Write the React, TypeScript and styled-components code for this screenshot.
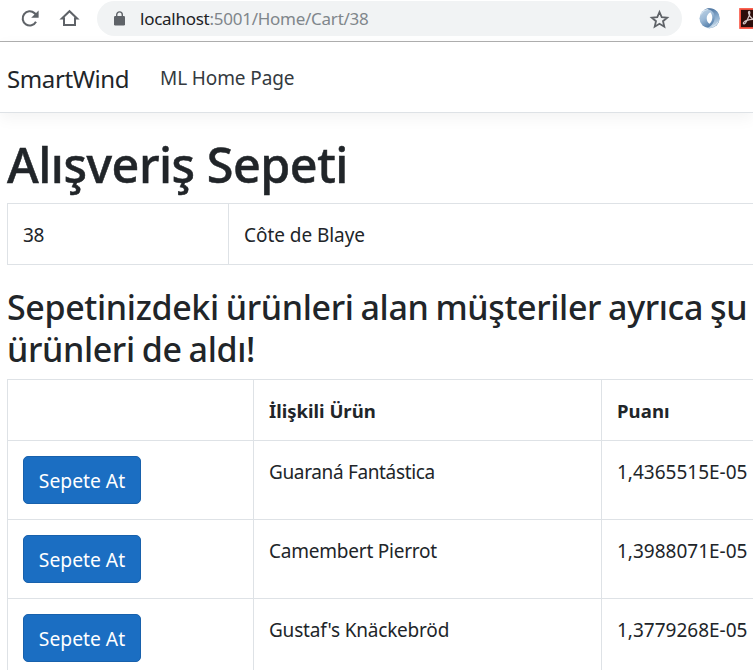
import React from 'react';
import styled, { createGlobalStyle } from 'styled-components';

const GlobalStyle = createGlobalStyle`
  *, *::before, *::after { box-sizing: border-box; }
  html, body { margin: 0; overflow: hidden; }
  body {
    background: #fff;
    color: #212529;
    font: 400 19px/30px "Noto Sans", "Open Sans", sans-serif;
  }
`;

const Window = styled.div`
  width: 753px;
  height: 670px;
  overflow: hidden;
  background: #fff;
`;

const BrowserBar = styled.div`
  display: flex;
  align-items: flex-start;
  height: 42px;
  padding-left: 18px;
  border-bottom: 1px solid #b0b0b0;
  overflow: hidden;
`;

const BarIcon = styled.svg<{ $gap: number }>`
  flex: none;
  width: 24px;
  height: 24px;
  margin: 6px ${(p) => p.$gap}px 0 0;
`;

const AddressBar = styled.div`
  display: flex;
  flex: none;
  align-items: center;
  width: 585px;
  height: 35px;
  margin: 1px 15px 0 0;
  padding: 0 11px 0 16px;
  border-radius: 18px;
  background: #f1f3f4;
`;

const LockIcon = styled.svg`
  width: 13px;
  height: 15px;
  margin-right: 14px;
`;

const Url = styled.span`
  flex: 1;
  color: #80868b;
  font-size: 17px;
  line-height: 24px;
  letter-spacing: -0.26px;
`;

const Host = styled.span`
  color: #202124;
`;

const StarIcon = styled.svg`
  width: 24px;
  height: 24px;
`;

const Navbar = styled.nav`
  display: flex;
  align-items: center;
  height: 71px;
  padding: 2px 7px 0;
  border-bottom: 1px solid #dee2e6;
  box-shadow: 0 5px 15px rgba(0, 0, 0, 0.05);
`;

const Brand = styled.a`
  width: 153px;
  padding-top: 1px;
  font-size: 24px;
  letter-spacing: -0.4px;
`;

const NavLink = styled.a`
  color: #343a40;
  letter-spacing: -0.1px;
`;

const Main = styled.main`
  padding: 20px 0 0 7px;
`;

const Title = styled.h1`
  height: 60px;
  margin: 0 0 10px;
  font-size: 48.5px;
  font-weight: 500;
  line-height: 62px;
  letter-spacing: -0.5px;
  -webkit-text-stroke: 0.5px #212529;
`;

const Subtitle = styled.h2`
  width: 746px;
  margin: 0 0 9px;
  font-size: 34px;
  font-weight: 500;
  line-height: 42px;
  letter-spacing: -0.36px;
  word-spacing: -1.5px;
`;

const Table = styled.table<{ $bottom?: number }>`
  width: 1000px;
  margin-bottom: ${(p) => p.$bottom ?? 0}px;
  table-layout: fixed;
  border-collapse: collapse;
`;

const Col = styled.col<{ $width?: number }>`
  width: ${(p) => (p.$width ? `${p.$width}px` : 'auto')};
`;

const Cell = styled.td<{ $tracking?: number }>`
  padding: 16px 15px 14px;
  border: 1px solid #dee2e6;
  text-align: left;
  vertical-align: top;
  letter-spacing: ${(p) => p.$tracking ?? 0}px;
`;

const HeadCell = styled(Cell)`
  font-weight: 700;
  font-size: 18.5px;
`;

const ActionCell = styled(Cell)`
  padding: 15px;
`;

const AddButton = styled.button`
  display: block;
  width: 118px;
  height: 48px;
  padding: 1px 0 0;
  border: 1px solid #1861ac;
  border-radius: 5px;
  background: #1b6ec2;
  color: #fff;
  font: inherit;
  font-size: 19.3px;
  letter-spacing: 0;
  white-space: nowrap;
`;

const products = [
  { name: 'Guaraná Fantástica', score: '1,4365515E-05', tracking: -0.35 },
  { name: 'Camembert Pierrot', score: '1,3988071E-05', tracking: -0.22 },
  { name: "Gustaf's Knäckebröd", score: '1,3779268E-05', tracking: -0.21 },
];

export default function App() {
  return (
    <Window>
      <GlobalStyle />
      <BrowserBar>
        <BarIcon $gap={15} viewBox="0 0 24 24">
          <path d="M18 15.8A7.1 7.1 0 1 1 16.5 7.1L18 8.7" fill="none" stroke="#5f6368" strokeWidth="2.1" />
          <path d="M20.6 4.4v7.4h-7.4z" fill="#5f6368" />
        </BarIcon>
        <BarIcon $gap={16} viewBox="0 0 24 24">
          <path
            d="M4.9 12.4L12.5 5.2l7.6 7.2H18v6.6H7v-6.6z"
            fill="none"
            stroke="#5f6368"
            strokeWidth="2"
          />
        </BarIcon>
        <AddressBar>
          <LockIcon viewBox="0 0 13 15">
            <rect x="1" y="5" width="11" height="9.4" rx="1.2" fill="#5f6368" />
            <path d="M3.7 5.5V3.7a2.8 2.8 0 0 1 5.6 0v1.8" fill="none" stroke="#5f6368" strokeWidth="1.4" />
          </LockIcon>
          <Url>
            <Host>localhost</Host>:5001/Home/Cart/38
          </Url>
          <StarIcon viewBox="0 0 24 24">
            <path
              d="M12.5 5l2.2 5.1 5.5.5-4.2 3.6 1.3 5.5-4.8-2.9-4.8 2.9L9 14.2l-4.2-3.6 5.5-.5z"
              fill="none"
              stroke="#5f6368"
              strokeWidth="1.8"
            />
          </StarIcon>
        </AddressBar>
        <BarIcon $gap={18} viewBox="0 0 24 24">
          <defs>
            <linearGradient id="swirlLight" x1="0" y1="0" x2="0.6" y2="1">
              <stop offset="0" stopColor="#c6d7e7" />
              <stop offset="0.5" stopColor="#9bb9d6" />
              <stop offset="1" stopColor="#426f9e" />
            </linearGradient>
            <linearGradient id="swirlDark" x1="0.3" y1="0" x2="0.6" y2="1">
              <stop offset="0" stopColor="#486f9b" />
              <stop offset="0.5" stopColor="#86a9cb" />
              <stop offset="1" stopColor="#c9dbea" />
            </linearGradient>
          </defs>
          <circle cx="12.5" cy="12.2" r="10" fill="url(#swirlLight)" />
          <path d="M7 3.9C13 1.8 17.9 5.8 17.6 11.7c-.2 4.7-2.7 8.2-7.6 10.2 6.8 1.4 12.2-3.2 12.5-9.2C22.8 6.7 18.3 2.2 12.7 2.2c-2.3 0-4.2.6-5.7 1.7z" fill="url(#swirlDark)" />
          <path d="M13.2 6.2c1.4 1.4 2.1 3.2 2.1 5.3 0 2.5-1 4.7-2.8 6.3-1.8-1.4-2.8-3.3-2.8-5.6 0-2.5 1.2-4.5 3.5-6z" fill="#fff" />
          <path d="M4.2 8.5C5.4 5.6 8 3.8 11.2 3.4M20.8 15.8c-1.3 2.5-3.2 3.9-5.8 4.6" fill="none" stroke="#e0ebf4" strokeWidth=".8" />
        </BarIcon>
        <BarIcon $gap={0} viewBox="0 0 24 24">
          <rect x="1.1" y="3" width="20" height="19" fill="#2d0e0b" stroke="#fa5341" strokeWidth="1.8" />
          <path
            d="M4.6 17.7c-.9-.8.8-2.3 3.4-3.3 2.2-4 3-6.6 2.8-8.3-.2-1.3-1.6-.6-1.2 1 .6 2.8 3.2 5.5 6 7.2M4.6 17.7c1.1.8 2.5-1.5 3.4-3.3 2.7-.9 5-1.3 9-.7"
            fill="none"
            stroke="#d6c7c7"
            strokeWidth="1.2"
          />
        </BarIcon>
      </BrowserBar>
      <Navbar>
        <Brand>SmartWind</Brand>
        <NavLink>ML Home Page</NavLink>
      </Navbar>
      <Main>
        <Title>Alışveriş Sepeti</Title>
        <Table $bottom={21}>
          <colgroup>
            <Col $width={221} />
            <Col />
          </colgroup>
          <tbody>
            <tr>
              <Cell $tracking={-0.3}>38</Cell>
              <Cell $tracking={-0.05}>Côte de Blaye</Cell>
            </tr>
          </tbody>
        </Table>
        <Subtitle>Sepetinizdeki ürünleri alan müşteriler ayrıca şu ürünleri de aldı!</Subtitle>
        <Table>
          <colgroup>
            <Col $width={246} />
            <Col $width={348} />
            <Col />
          </colgroup>
          <thead>
            <tr>
              <HeadCell as="th" />
              <HeadCell as="th">İlişkili Ürün</HeadCell>
              <HeadCell as="th" $tracking={0.1}>Puanı</HeadCell>
            </tr>
          </thead>
          <tbody>
            {products.map((p) => (
              <tr key={p.name}>
                <ActionCell>
                  <AddButton>Sepete At</AddButton>
                </ActionCell>
                <Cell $tracking={p.tracking}>{p.name}</Cell>
                <Cell>{p.score}</Cell>
              </tr>
            ))}
          </tbody>
        </Table>
      </Main>
    </Window>
  );
}
